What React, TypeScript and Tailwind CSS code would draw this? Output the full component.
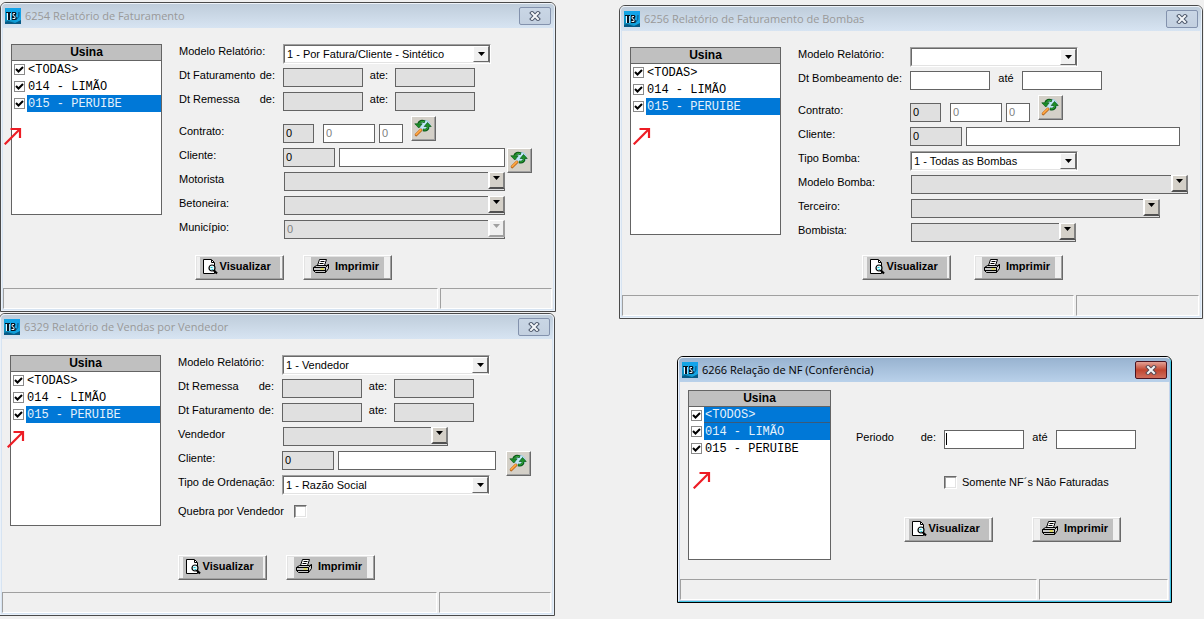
import { useId, type ReactNode } from "react";
import { clsx } from "clsx";

type Plant = { name: string; selected?: boolean; divider?: boolean };

const PLANTS: Plant[] = [
  { name: "<TODAS>" },
  { name: "014 - LIMÃO" },
  { name: "015 - PERUIBE", selected: true },
];

const PLANTS_NF: Plant[] = [
  { name: "<TODOS>", selected: true, divider: true },
  { name: "014 - LIMÃO", selected: true },
  { name: "015 - PERUIBE" },
];

function AppLogo() {
  return (
    <svg viewBox="0 0 16 16" className="size-4 shrink-0" aria-hidden="true">
      <defs>
        <linearGradient id="logo-bg" x1="0" y1="1" x2="1" y2="0">
          <stop offset="0" stopColor="#0a7fa8" />
          <stop offset="0.5" stopColor="#12a6e4" />
          <stop offset="1" stopColor="#12a0ec" />
        </linearGradient>
      </defs>
      <rect width="16" height="16" fill="url(#logo-bg)" />
      <path d="M0 14 L3 13 L10 15 L16 12 V16 H0Z" fill="#075a86" />
      <path d="M11 12 Q15 9 14 4" stroke="#0b4f7e" fill="none" />
      <path d="M1 4.500h5" stroke="#04121f" />
      <path d="M2.500 5v7" stroke="#e6f6ff" />
      <path d="M4 5v7" stroke="#04121f" strokeWidth="2" />
      <path d="M5.500 5v7" stroke="#9fdcf8" strokeWidth="1" />
      <path d="M7 4h3.500l1 1.500-1 2.500 1.500 2-1.500 2H7z" fill="#04121f" />
      <path d="M10 5.500H8.200L8 7.500 10 8.500V10.500H7.500" fill="none" stroke="#e6f6ff" strokeWidth="1" />
    </svg>
  );
}

function CloseGlyph({ active }: { active?: boolean }) {
  return (
    <svg viewBox="0 0 12 10" className="h-[10px] w-3" aria-hidden="true">
      <path d="M3 2 L9 8 M9 2 L3 8" stroke={active ? "#5b4a52" : "#4d586b"} strokeWidth="4" strokeLinecap="square" />
      <path d="M3 2 L9 8 M9 2 L3 8" stroke="#f4f6f9" strokeWidth="2" strokeLinecap="square" />
    </svg>
  );
}

function SearchGlyph() {
  return (
    <svg viewBox="0 0 18 18" className="size-[18px]" fill="none" aria-hidden="true">
      <circle cx="11" cy="6.500" r="5.200" fill="#bfe6f7" stroke="#a3cde4" />
      <path d="M7 11 L2.200 15.800" stroke="#b5651d" strokeWidth="3" strokeLinecap="round" />
      <path d="M6.800 10.800 L2.200 15.400" stroke="#ffa640" strokeWidth="1.800" strokeLinecap="round" />
      <path d="M11 2.800 Q6 0.800 4.500 5" stroke="#0c5a18" strokeWidth="2.800" />
      <path d="M0.800 4.800 H8.200 L4.800 9Z" fill="#1c8f28" stroke="#0c5a18" strokeWidth="0.700" />
      <path d="M10.500 2.700 Q6.500 1.500 4.800 5" stroke="#35b53f" strokeWidth="1" />
      <path d="M9 10.800 Q14.500 12 14 7" stroke="#0c5a18" strokeWidth="2.800" />
      <path d="M10.200 7.500 H17.200 L13.500 3.500Z" fill="#1c8f28" stroke="#0c5a18" strokeWidth="0.700" />
      <path d="M9.500 10.800 Q13.800 11.500 14 7" stroke="#35b53f" strokeWidth="1" />
    </svg>
  );
}

function PreviewGlyph() {
  return (
    <svg viewBox="0 0 16 16" className="size-4 shrink-0" fill="none" aria-hidden="true">
      <path d="M1.500 0.500 H9.500 L12.500 3.500 V14.500 H1.500Z" fill="#fff" stroke="#000" />
      <path d="M9.500 1 V3.500 H12" stroke="#000" />
      <circle cx="10" cy="9" r="3" fill="#dffcff" stroke="#000" strokeWidth="1.200" />
      <path d="M8.500 8.500 H10.500 M9.500 10.500 H11" stroke="#18c8d8" />
      <path d="M12 11.500 L15 14.500" stroke="#000" strokeWidth="2.200" />
    </svg>
  );
}

function PrinterGlyph() {
  return (
    <svg viewBox="0 0 17 16" className="h-4 w-[17px] shrink-0" fill="none" stroke="#000" aria-hidden="true">
      <path d="M4.500 6.500 L6.500 0.500 H13.500 L11.500 6.500Z" fill="#fff" />
      <path d="M7.500 2.500 H11.500 M6.500 4.500 H10.500" />
      <path d="M0.500 8.500 L3.500 6.500 H13.500 L15.500 5.500 V9.500 L12.500 13.500 H2.500 L0.500 11.500Z" fill="#c8c8c8" />
      <path d="M0.500 8.500 H12.500 L15.500 5.500 M12.500 8.500 V13.500 M0.500 11.500 H12.500" />
      <path d="M7.500 10 H11" stroke="#f4e600" />
    </svg>
  );
}

function Arrow({ className }: { className: string }) {
  return (
    <svg viewBox="0 0 18 18" className={clsx("absolute size-[18px]", className)} fill="none" aria-hidden="true">
      <path d="M0.700 17.300 L15 3" stroke="#ed1c24" strokeWidth="2.200" />
      <path d="M6.500 2 H16 V11" stroke="#ed1c24" strokeWidth="2.200" />
    </svg>
  );
}

type WindowProps = {
  title: string;
  className: string;
  active?: boolean;
  statusWidth: string;
  bodyClass?: string;
  children: ReactNode;
};

function Window({ title, className, active, statusWidth, bodyClass = "pt-4", children }: WindowProps) {
  return (
    <section
      aria-label={title}
      className={clsx("absolute rounded-t-md border bg-[#f0f0f0]", active ? "border-black" : "border-[#4a4a4a]", className)}
    >
      <div
        className={clsx(
          "rounded-t-[5px] border border-t-[#eef3f9] border-l-[#eaf1f9]",
          active ? "border-r-[#3fc4e2] border-b-[#3fc4e2]" : "border-r-[#e9f1fa] border-b-[#e9f1fa]"
        )}
      >
        <header
          className={clsx(
            "flex h-6 items-center rounded-t-[4px] bg-linear-to-b px-[3px]",
            active ? "from-[#98b3d0] to-[#b9d1ea]" : "from-[#bfcddb] to-[#d7e4f2]"
          )}
        >
          <AppLogo />
          <h2
            className={clsx(
              "ml-1 flex-1 truncate font-['Segoe_UI','Open_Sans',sans-serif] text-[11px] leading-4 font-normal",
              active ? "text-black" : "text-[#999999]"
            )}
          >
            {title}
          </h2>
          <button
            type="button"
            aria-label="Fechar"
            className={clsx(
              "flex h-[18px] w-8 items-center justify-center rounded-[2px] border bg-linear-to-b",
              active
                ? "border-[#4a1420] from-[#e3a196] via-[#c0452f] to-[#cf6d5c]"
                : "border-[#8392ad] from-[#c9d6e5] to-[#c3d0e0]"
            )}
          >
            <CloseGlyph active={active} />
          </button>
        </header>
        <div className={clsx("border-x border-b", active ? "border-[#c5d3ea]" : "border-[#d7e4f2]")}>
          <div className={clsx("flex items-start pl-2", bodyClass)}>{children}</div>
          <footer className="flex gap-[2px] pr-px">
            <div className="h-[21px] flex-1 border border-t-[#a0a0a0] border-r-white border-b-white border-l-[#a0a0a0]" />
            <div className={clsx("h-[21px] border border-t-[#a0a0a0] border-r-white border-b-white border-l-[#a0a0a0]", statusWidth)} />
          </footer>
        </div>
      </div>
    </section>
  );
}

function PlantList({ plants, className }: { plants: Plant[]; className: string }) {
  return (
    <fieldset className={clsx("shrink-0 border border-[#646464] bg-white", className)}>
      <div className="h-4 border-b border-[#646464] bg-[#c0c0c0] text-center text-xs leading-[15px] font-bold">Usina</div>
      {plants.map((p) => (
        <label
          key={p.name}
          className={clsx(
            "flex items-center font-['Courier_New','Liberation_Mono',monospace] text-xs leading-4",
            p.divider ? "h-4" : "h-[17px]"
          )}
        >
          <span className="relative mr-[2px] ml-[2px] flex size-[11px] shrink-0">
            <input type="checkbox" defaultChecked className="peer size-[11px] appearance-none border border-[#8a8a8a] bg-white" />
            <svg viewBox="0 0 11 11" className="pointer-events-none absolute inset-0 hidden peer-checked:block" fill="none">
              <path d="M2 5 L4.500 7.500 L9 3" stroke="#000" strokeWidth="2" />
            </svg>
          </span>
          <span
            className={clsx(
              "flex h-full flex-1 items-center pl-px",
              p.selected && "bg-[#0078d7] text-[#e4f1fb]",
              p.divider && "border-b border-[#3c5a78]"
            )}
          >
            {p.name}
          </span>
        </label>
      ))}
    </fieldset>
  );
}

type RowProps = { label: string; suffix?: string; width: string; htmlFor?: string; children: ReactNode };

function Row({ label, suffix, width, htmlFor, children }: RowProps) {
  return (
    <div className="flex h-6 items-start">
      <label htmlFor={htmlFor} className={clsx("flex shrink-0 justify-between pr-2 leading-[14px] whitespace-nowrap", width)}>
        {label}
        {suffix && <span>{suffix}</span>}
      </label>
      {children}
    </div>
  );
}

type BoxProps = { id?: string; label?: string; value?: string; width: string; gray?: boolean; dim?: boolean };

function Box({ id, label, value, width, gray, dim }: BoxProps) {
  return (
    <input
      id={id}
      type="text"
      aria-label={label}
      defaultValue={value}
      className={clsx(
        "h-[19px] shrink-0 rounded-none border border-[#646464] px-[2px] pb-px outline-none",
        gray ? "bg-[#e0e0e0]" : "bg-white",
        dim && "text-[#808080]",
        width
      )}
    />
  );
}

type DateRowProps = { label: string; width: string; until?: string; gray?: boolean; caret?: boolean };

function DateRow({ label, width, until = "ate:", gray, caret }: DateRowProps) {
  const id = useId();
  return (
    <Row label={label} suffix="de:" width={width} htmlFor={id}>
      <span className="relative flex">
        <Box id={id} width="w-20" gray={gray} />
        {caret && <span className="absolute top-[3px] left-[2px] h-3 w-px bg-black" />}
      </span>
      <label htmlFor={id + "end"} className="w-8 text-center leading-[14px]">
        {until}
      </label>
      <Box id={id + "end"} width="w-20" gray={gray} />
    </Row>
  );
}

function SelectRow({ label, width, value, size }: { label: string; width: string; value: string; size: string }) {
  const id = useId();
  return (
    <Row label={label} width={width} htmlFor={id}>
      <div className={clsx("relative h-5 border border-t-[#a0a0a0] border-r-white border-b-white border-l-[#a0a0a0]", size)}>
        <select
          id={id}
          className="block h-full w-full appearance-none border border-t-[#696969] border-r-[#696969] border-b-[#e3e3e3] border-l-[#696969] bg-white pr-5 pl-[2px] outline-none"
        >
          <option>{value}</option>
        </select>
        <span className="pointer-events-none absolute top-px right-px flex h-4 w-4 items-center justify-center border border-t-white border-r-[#696969] border-b-[#696969] border-l-white bg-[#f0f0f0]">
          <svg viewBox="0 0 7 4" className="h-1 w-[7px]">
            <path d="M0 0H7L3.500 4Z" fill="#000" />
          </svg>
        </span>
      </div>
    </Row>
  );
}

type LookupRowProps = { label: string; width: string; size: string; value?: string; disabled?: boolean };

function LookupRow({ label, width, size, value = "", disabled }: LookupRowProps) {
  const id = useId();
  return (
    <Row label={label} width={width} htmlFor={id}>
      <div className={clsx("relative ml-px h-[19px]", size)}>
        <select
          id={id}
          disabled={disabled}
          className="block h-full w-full appearance-none border border-[#646464] bg-[#e0e0e0] px-[2px] pb-px opacity-100 outline-none disabled:text-[#808080]"
        >
          <option>{value}</option>
        </select>
        <span
          className={clsx(
            "pointer-events-none absolute top-0 right-0 flex h-[17px] w-[17px] justify-center border-t border-r-2 border-b-2 border-l-2 border-t-white border-l-white pt-[3px]",
            disabled ? "border-r-[#a0a0a0] border-b-[#a0a0a0] bg-[#f0f0f0]" : "border-r-[#808080] border-b-[#505050] bg-[#d4d0c8]"
          )}
        >
          <svg viewBox="0 0 7 4" className="h-1 w-[7px]">
            <path d="M0 0H7L3.500 4Z" fill={disabled ? "#a0a0a0" : "#000"} />
          </svg>
        </span>
      </div>
    </Row>
  );
}

function SearchButton({ label, className }: { label: string; className?: string }) {
  return (
    <button
      type="button"
      aria-label={label}
      className={clsx(
        "flex size-[25px] shrink-0 items-start justify-center border border-t-white border-r-[#696969] border-b-[#696969] border-l-white bg-[#d4d0c8] pt-[2px] pr-[2px] shadow-[inset_-1px_-1px_0_#a0a0a0]",
        className
      )}
    >
      <SearchGlyph />
    </button>
  );
}

function ContractRow({ width }: { width: string }) {
  const id = useId();
  return (
    <Row label="Contrato:" width={width} htmlFor={id}>
      <Box id={id} value="0" width="w-[31px]" gray />
      <span className="ml-[9px] flex gap-1">
        <Box label="Contrato, número" value="0" width="w-[52px]" dim />
        <Box label="Contrato, item" value="0" width="w-6" dim />
      </span>
      <SearchButton label="Buscar contrato" className="-mt-2 ml-2" />
    </Row>
  );
}

function ClientRow({ width, size, children }: { width: string; size: string; children?: ReactNode }) {
  const id = useId();
  return (
    <Row label="Cliente:" width={width} htmlFor={id}>
      <span className="flex gap-1">
        <Box id={id} value="0" width="w-[52px]" gray />
        <Box label="Nome do cliente" width={size} />
      </span>
      {children}
    </Row>
  );
}

function CheckBox({ id }: { id: string }) {
  return (
    <input
      id={id}
      type="checkbox"
      className="size-[13px] shrink-0 appearance-none border border-t-[#696969] border-r-white border-b-white border-l-[#696969] bg-white shadow-[inset_1px_1px_0_#a0a0a0,inset_-1px_-1px_0_#e3e3e3]"
    />
  );
}

function Actions({ className }: { className: string }) {
  const button =
    "flex h-[25px] w-[89px] items-center justify-center border border-t-white border-r-[#696969] border-b-[#696969] border-l-white bg-[#f0f0f0] font-bold shadow-[inset_-1px_-1px_0_#a0a0a0,inset_1px_1px_0_#e3e3e3]";
  return (
    <div className={clsx("flex", className)}>
      <button type="button" className={button}>
        <span className="flex h-[21px] w-20 items-center gap-[2px] bg-[#c0c0c0] pb-[2px] pl-[2px]">
          <PreviewGlyph />
          Visualizar
        </span>
      </button>
      <button type="button" className={button}>
        <span className="flex h-[21px] w-[73px] items-center gap-[5px] bg-[#c0c0c0] pb-[2px] pl-[2px]">
          <PrinterGlyph />
          Imprimir
        </span>
      </button>
    </div>
  );
}

export default function App() {
  return (
    <main className="relative min-h-screen overflow-hidden bg-[#f0f0f0] font-['MS_Sans_Serif','Liberation_Sans',sans-serif] text-[11px] text-black">
      <Window title="6254 Relatório de Faturamento" className="top-[2px] left-0 w-[556px]" statusWidth="w-28">
        <PlantList plants={PLANTS} className="h-[171px] w-[151px]" />
        <form className="ml-[17px] pb-2">
          <SelectRow label="Modelo Relatório:" width="w-[104px]" value="1 - Por Fatura/Cliente - Sintético" size="w-52" />
          <DateRow label="Dt Faturamento" width="w-[104px]" gray />
          <DateRow label="Dt Remessa" width="w-[104px]" gray />
          <div className="pt-2">
            <ContractRow width="w-[104px]" />
            <ClientRow width="w-[104px]" size="w-[166px]">
              <SearchButton label="Buscar cliente" className="ml-[2px]" />
            </ClientRow>
            <LookupRow label="Motorista" width="w-[104px]" size="w-[221px]" />
            <LookupRow label="Betoneira:" width="w-[104px]" size="w-[221px]" />
            <LookupRow label="Município:" width="w-[104px]" size="w-[221px]" value="0" disabled />
          </div>
          <Actions className="gap-[19px] pt-[11px] pl-4" />
        </form>
      </Window>

      <Window title="6256 Relatório de Faturamento de Bombas" className="top-[5px] left-[619px] w-[584px]" statusWidth="w-[123px]">
        <PlantList plants={PLANTS} className="h-[188px] w-[151px]" />
        <form className="ml-[17px] pb-[15px]">
          <SelectRow label="Modelo Relatório:" width="w-28" value="" size="w-[168px]" />
          <DateRow label="Dt Bombeamento" width="w-28" until="até" />
          <div className="pt-2">
            <ContractRow width="w-28" />
            <ClientRow width="w-28" size="w-[214px]" />
            <SelectRow label="Tipo Bomba:" width="w-28" value="1 - Todas as Bombas" size="w-[168px]" />
            <LookupRow label="Modelo Bomba:" width="w-28" size="w-[277px]" />
            <LookupRow label="Terceiro:" width="w-28" size="w-[249px]" />
            <LookupRow label="Bombista:" width="w-28" size="w-[165px]" />
          </div>
          <Actions className="gap-[23px] pt-2 pl-16" />
        </form>
      </Window>

      <Window title="6329 Relatório de Vendas por Vendedor" className="top-[313px] -left-px w-[556px]" statusWidth="w-28">
        <PlantList plants={PLANTS} className="h-[171px] w-[151px]" />
        <form className="ml-[17px] pb-3">
          <SelectRow label="Modelo Relatório:" width="w-[104px]" value="1 - Vendedor" size="w-52" />
          <DateRow label="Dt Remessa" width="w-[104px]" gray />
          <DateRow label="Dt Faturamento" width="w-[104px]" gray />
          <LookupRow label="Vendedor" width="w-[104px]" size="w-[165px]" />
          <ClientRow width="w-[104px]" size="w-[158px]">
            <SearchButton label="Buscar cliente" className="ml-[10px]" />
          </ClientRow>
          <SelectRow label="Tipo de Ordenação:" width="w-[104px]" value="1 - Razão Social" size="w-52" />
          <div className="flex items-center pt-[6px]">
            <label htmlFor="quebra" className="w-[116px] leading-[13px]">
              Quebra por Vendedor
            </label>
            <CheckBox id="quebra" />
          </div>
          <Actions className="gap-[19px] pt-[37px]" />
        </form>
      </Window>

      <Window
        title="6266 Relação de NF (Conferência)"
        className="top-[356px] left-[677px] w-[495px]"
        statusWidth="w-[129px]"
        bodyClass="pt-2 pb-[19px]"
        active
      >
        <PlantList plants={PLANTS_NF} className="h-[170px] w-[143px]" />
        <form className="ml-[25px] pt-10">
          <DateRow label="Periodo" width="w-[88px]" until="até" caret />
          <div className="flex items-center gap-[5px] pt-[22px] pl-[88px]">
            <CheckBox id="somente" />
            <label htmlFor="somente" className="leading-[13px]">
              Somente NF´s Não Faturadas
            </label>
          </div>
          <Actions className="gap-[39px] pt-7 pl-12" />
        </form>
      </Window>

      <Arrow className="top-[127px] left-1" />
      <Arrow className="top-[127px] left-[633px]" />
      <Arrow className="top-[430px] left-[7px]" />
      <Arrow className="top-[471px] left-[693px]" />
    </main>
  );
}
